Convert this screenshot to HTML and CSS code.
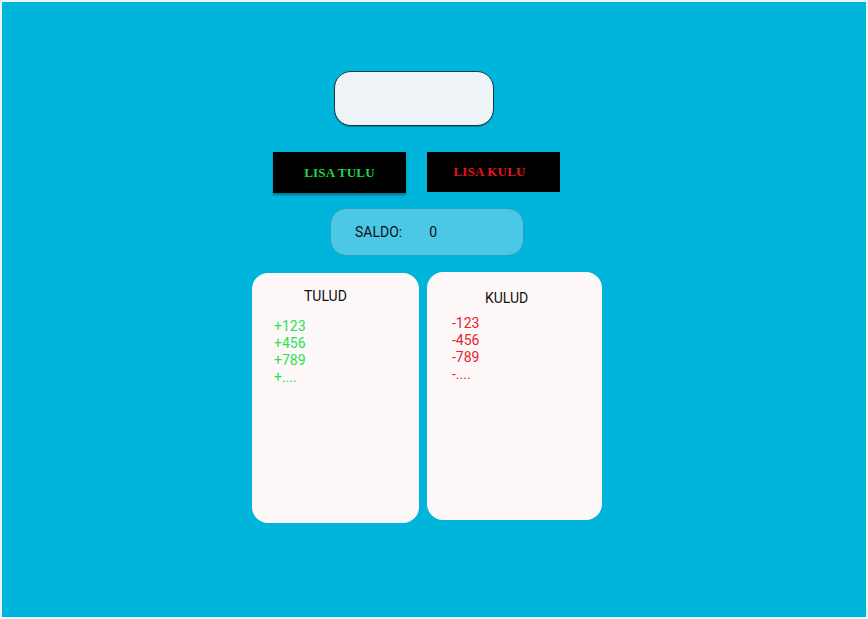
FILE: index.html
```html
<!DOCTYPE html>
<html>
<head>
<meta charset="utf-8">
<link rel="stylesheet" href="styles.css">
</head>
<body>
<div class="page">
  <div class="col">
    <div class="field"></div>
    <div class="buttons">
      <div class="btn btn-in">LISA TULU</div>
      <div class="btn btn-out">LISA KULU</div>
    </div>
    <div class="saldo"><span class="saldo-label">SALDO:</span><span class="saldo-val">0</span></div>
    <div class="cards">
      <div class="card card-in">
        <div class="title">TULUD</div>
        <div class="list">
          <div>+123</div><div>+456</div><div>+789</div><div>+....</div>
        </div>
      </div>
      <div class="card card-out">
        <div class="title">KULUD</div>
        <div class="list">
          <div>-123</div><div>-456</div><div>-789</div><div>-....</div>
        </div>
      </div>
    </div>
  </div>
</div>
</body>
</html>
```
FILE: styles.css
```css
html, body { margin: 0; padding: 0; }
body {
  background: #eaf6fa;
  font-family: Roboto, "Liberation Sans", sans-serif;
  width: 868px;
  height: 619px;
  overflow: hidden;
}
.page {
  margin: 2px;
  width: 864px;
  height: 615px;
  background: #00b5dc;
  box-sizing: border-box;
  padding: 69px 0 0 250px;
}
.col {
  width: 352px;
  display: flex;
  flex-direction: column;
  align-items: flex-start;
}
.field {
  margin-left: 82px;
  width: 160px;
  height: 55px;
  box-sizing: border-box;
  background: #edf3f6;
  border: 1px solid #123d48;
  border-radius: 17px;
  box-shadow: 0 1px 1px rgba(0, 0, 0, 0.3);
}
.buttons {
  margin-top: 26px;
  margin-left: 21px;
  display: flex;
  gap: 21px;
  align-items: flex-start;
}
.btn {
  width: 133px;
  height: 41px;
  background: #000;
  display: flex;
  align-items: center;
  justify-content: center;
  font-family: "Liberation Serif", "DejaVu Serif", serif;
  font-weight: bold;
  font-size: 13px;
  letter-spacing: 0.2px;
}
.btn-in {
  color: #1fd746;
  box-shadow: 0 2px 2px rgba(0, 0, 0, 0.35);
}
.btn-out {
  color: #e5141e;
  height: 40px;
  padding-right: 8px;
  box-sizing: border-box;
}
.saldo {
  margin-top: 15px;
  margin-left: 78px;
  width: 194px;
  height: 48px;
  box-sizing: border-box;
  background: #4bc8e6;
  border: 1px solid #2aa0bd;
  border-radius: 16px;
  display: flex;
  align-items: center;
  padding-left: 24px;
  font-size: 14px;
  color: #111;
}
.saldo-val { margin-left: 27px; }
.cards {
  margin-top: 16px;
  display: flex;
  gap: 8px;
  align-items: flex-start;
}
.card {
  background: #fdf8f7;
  border-radius: 16px;
  box-sizing: border-box;
  font-size: 14px;
  line-height: 17px;
}
.card-in {
  margin-top: 1px;
  width: 167px;
  height: 250px;
  padding: 15px 0 0 22px;
}
.card-in .title { margin-left: 30px; color: #111; }
.card-in .list { margin-top: 13px; color: #2ae05a; }
.card-out {
  width: 175px;
  height: 248px;
  padding: 18px 0 0 25px;
}
.card-out .title { margin-left: 33px; color: #111; }
.card-out .list { margin-top: 8px; color: #e8222c; }
```
